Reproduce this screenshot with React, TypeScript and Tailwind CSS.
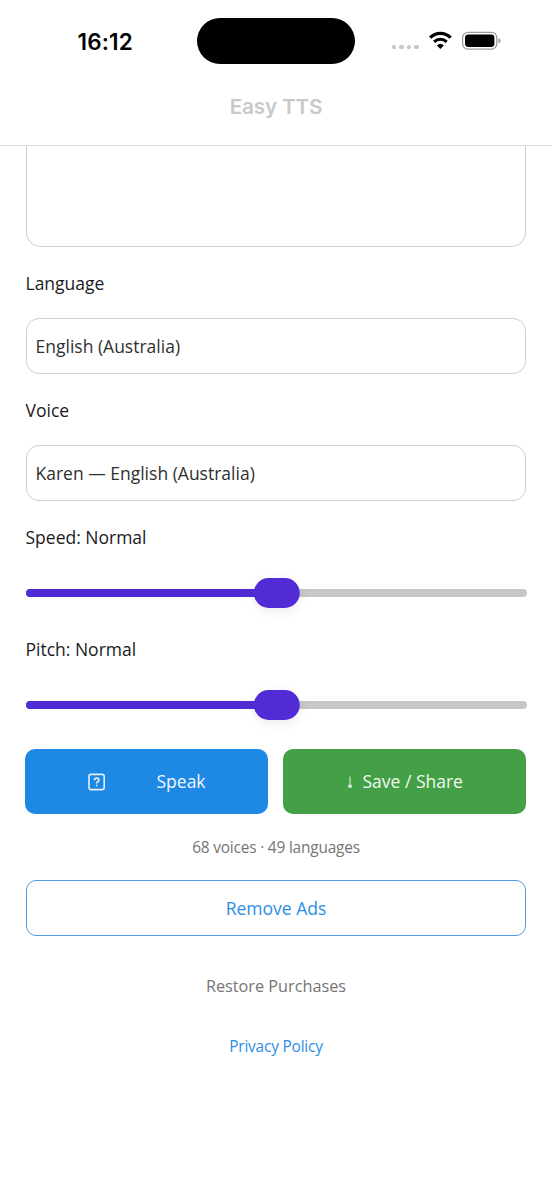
import React from 'react';

type SliderProps = {
  label: string;
  value: number;
};

// Read-only picker that looks like a text field
const PickerField: React.FC<{ label: string; value: string }> = ({ label, value }) => (
  <div>
    <div className="-ml-[0.5px] flex h-[71px] items-center pt-px text-[17.5px] text-[#1b1b1b]">{label}</div>
    <button className="flex h-[56px] w-full items-center rounded-[13px] border-[1.5px] border-[#cecece] pl-[8.5px] text-[17.5px] text-[#303030]">
      {value}
    </button>
  </div>
);

const Slider: React.FC<SliderProps> = ({ label, value }) => (
  <div>
    <div className="-ml-[0.5px] flex h-[71px] items-center pt-px text-[17.5px] text-[#1b1b1b]">{label}</div>
    <div className="relative flex h-[41px] items-center">
      <div className="-mx-[0.5px] h-[8px] grow overflow-hidden rounded-full bg-[#c7c7c7]">
        <div className="h-full bg-[#512bd4]" style={{ width: `${value}%` }} />
      </div>
      <div
        className="absolute h-[30px] w-[46.5px] -translate-x-1/2 rounded-[15px] bg-[#512bd4] shadow-[0_3px_12px_rgba(0,0,0,0.08)]"
        style={{ left: `calc(${value}% + 0.5px)` }}
      />
    </div>
  </div>
);

const StatusBar: React.FC = () => (
  <div className="relative h-[81px] text-black">
    <div className="absolute left-[77.5px] top-[27px] font-['Inter'] text-[22.5px] font-semibold leading-[30px] tracking-[0.15px]">
      16:12
    </div>
    <div className="absolute left-[197px] top-[17.5px] h-[46.5px] w-[158px] rounded-full bg-black" />
    <div className="absolute left-[391.5px] top-[44.5px] flex gap-[2.9px]">
      {[0, 1, 2, 3].map(dot => (
        <span key={dot} className="h-[4.7px] w-[4.7px] rounded-[1.5px] bg-[#c9c9c9]" />
      ))}
    </div>
    <svg className="absolute left-[428px] top-[31px]" width="25" height="19" viewBox="0 0 25 19">
      <path d="M2.1 6.6 A14.6 14.6 0 0 1 22.7 6.6" fill="none" stroke="black" strokeWidth="3.1" />
      <path d="M6.1 10.9 A9.1 9.1 0 0 1 18.7 10.9" fill="none" stroke="black" strokeWidth="3" />
      <path d="M8.9 14.4 Q12.4 11.3 15.9 14.4 L12.4 18 Z" fill="black" />
    </svg>
    <svg className="absolute left-[461px] top-[31px]" width="42" height="20" viewBox="0 0 42 20">
      <rect x="1.6" y="1.3" width="34.2" height="16.9" rx="5.5" fill="none" stroke="#9b9b9b" strokeWidth="1.3" />
      <rect x="4" y="3.6" width="29.4" height="12.3" rx="3.4" fill="black" />
      <path d="M37.4 6.9 Q39.6 8 39.6 9.7 Q39.6 11.4 37.4 12.5 Z" fill="#9b9b9b" />
    </svg>
  </div>
);

// Missing-glyph box shown in front of the Speak label
const MissingGlyph: React.FC = () => (
  <svg width="18" height="18" viewBox="0 0 18 18" fill="none" stroke="#e3f0fb" strokeWidth="1.6">
    <rect x="1" y="1.4" width="15.2" height="15.2" rx="2" />
    <path d="M6.4 7.2 Q6.5 5.1 8.7 5.1 Q10.9 5.1 10.9 6.9 Q10.9 8 9.7 8.7 Q8.7 9.3 8.7 10.5" />
    <path d="M8.7 11.7 V13.3" />
  </svg>
);

const DownArrow: React.FC = () => (
  <svg width="7" height="14" viewBox="0 0 7 14" fill="none" stroke="#d9edda">
    <path d="M3 1.5 V11" strokeWidth="1.1" />
    <path d="M1.1 12.3 L1.9 9.6 L3 10.6 L4.1 9.6 L4.9 12.3 Z" fill="#d9edda" strokeWidth="0.6" />
  </svg>
);

const App: React.FC = () => {
  return (
    <div className="h-[1200px] w-[552px] overflow-hidden bg-white font-['Open_Sans',sans-serif]">
      <header className="h-[146px] border-b border-[#dddddd]">
        <StatusBar />
        <h1 className="pt-px text-center font-['Inter'] text-[20.7px] font-semibold leading-[50px] tracking-[-0.15px] text-[#c9c9c9]">
          Easy TTS
        </h1>
      </header>

      <main className="px-[26px]">
        <div className="h-[101px] rounded-b-[15px] border-x-[1.5px] border-b-[1.5px] border-[#cecece]" />

        <PickerField label="Language" value="English (Australia)" />
        <PickerField label="Voice" value="Karen — English (Australia)" />
        <Slider label="Speed: Normal" value={50} />
        <Slider label="Pitch: Normal" value={50} />

        <div className="-ml-px mt-[24px] grid grid-cols-2 gap-[15px] text-[17.5px]">
          <button className="flex h-[65px] items-center rounded-[10px] bg-[#1e88e5] pl-[62.5px] text-[#f0f7fd]">
            <MissingGlyph />
            <span className="ml-[51px]">Speak</span>
          </button>
          <button className="flex h-[65px] items-center rounded-[10px] bg-[#43a047] pl-[63.5px] text-[#f0f8f0]">
            <DownArrow />
            <span className="ml-[9px]">Save / Share</span>
          </button>
        </div>

        <p className="text-center text-[15.4px] leading-[66px] tracking-[-0.18px] text-[#757575]">
          <span className="relative top-px">68 voices · 49 languages</span>
        </p>

        <button className="block h-[56px] w-full rounded-[10px] border-[1.5px] border-[#4a9de6] text-[17.5px] text-[#2b8ee6]">
          Remove Ads
        </button>
        <button className="mt-[20px] block h-[60px] w-full text-[16.25px] text-[#757575]">Restore Purchases</button>
        <button className="block h-[60px] w-full pt-[2px] text-[15.4px] tracking-[-0.18px] text-[#2b8ee6]">
          Privacy Policy
        </button>
      </main>
    </div>
  );
};

export default App;
